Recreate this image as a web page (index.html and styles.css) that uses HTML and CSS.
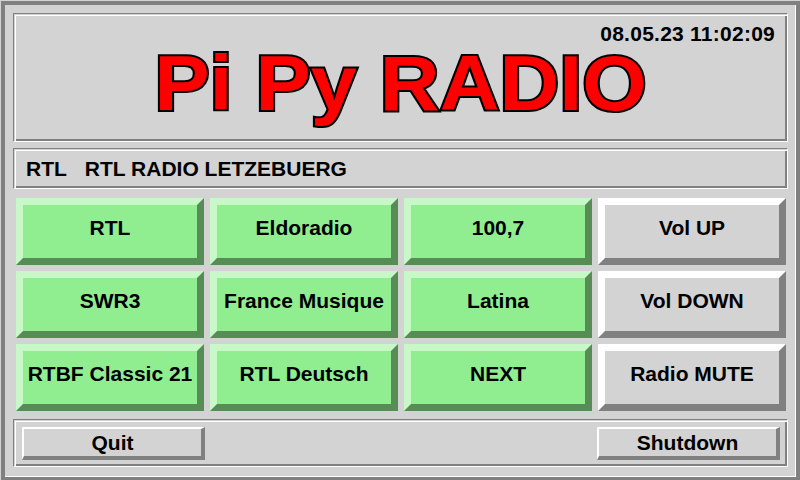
FILE: index.html
```html
<!DOCTYPE html>
<html>
<head>
<meta charset="utf-8">
<link rel="stylesheet" href="styles.css">
</head>
<body>
<div class="window">
  <div class="frame title-frame">
    <div class="clock">08.05.23 11:02:09</div>
    <div class="logo">Pi Py RADIO</div>
  </div>
  <div class="frame station-frame"><span>RTL</span><span>RTL RADIO LETZEBUERG</span></div>
  <div class="grid">
    <div class="btn green">RTL</div>
    <div class="btn green">Eldoradio</div>
    <div class="btn green">100,7</div>
    <div class="btn gray">Vol UP</div>
    <div class="btn green">SWR3</div>
    <div class="btn green">France Musique</div>
    <div class="btn green">Latina</div>
    <div class="btn gray">Vol DOWN</div>
    <div class="btn green">RTBF Classic 21</div>
    <div class="btn green">RTL Deutsch</div>
    <div class="btn green">NEXT</div>
    <div class="btn gray">Radio MUTE</div>
  </div>
  <div class="frame bottom-frame">
    <div class="small">Quit</div>
    <div class="small">Shutdown</div>
  </div>
</div>
</body>
</html>
```
FILE: styles.css
```css
* { box-sizing: border-box; }
html, body { margin: 0; padding: 0; }
body {
  background: #d3d3d3;
  width: 800px;
  height: 480px;
  overflow: hidden;
  font-family: "Liberation Sans", Arial, sans-serif;
  font-weight: bold;
  color: #000;
}
.window {
  margin: 1px 0 0 1px;
  width: 799px;
  height: 479px;
  border-style: solid;
  border-color: #808080;
  border-width: 4px 4px 3px 4px;
  box-shadow: inset -1px -1px 0 #fff;
  padding: 8px 8px 0 8px;
  display: flex;
  flex-direction: column;
}
.frame {
  border: 1px solid;
  border-color: #808080 #fff #fff #808080;
  box-shadow: inset 1px 1px 0 #d3d3d3, inset 2px 2px 0 #fff, inset -2px -2px 0 #808080;
}
.title-frame {
  height: 129px;
  flex: none;
  display: flex;
  flex-direction: column;
  padding-top: 8px;
}
.clock {
  font-size: 21px;
  line-height: 24px;
  text-align: right;
  padding-right: 12px;
  letter-spacing: 0.25px;
}
.logo {
  font-size: 77px;
  line-height: 75px;
  text-align: center;
  color: #f00;
  -webkit-text-stroke: 4px #000;
  paint-order: stroke fill;
  transform: scaleX(1.075);
}
.station-frame {
  height: 41px;
  flex: none;
  margin-top: 6px;
  display: flex;
  align-items: center;
  gap: 18px;
  padding-left: 12px;
  font-size: 21px;
}
.grid {
  margin-top: 9px;
  margin-left: 3px;
  display: grid;
  grid-template-columns: repeat(4, 188px);
  grid-template-rows: repeat(3, 67px);
  gap: 6px;
}
.btn {
  display: flex;
  align-items: center;
  justify-content: center;
  border: 7px solid;
  font-size: 21px;
  padding-bottom: 7px;
  white-space: nowrap;
}
.green {
  background: #90ee90;
  border-color: #c8f7c8 #578c57 #578c57 #c8f7c8;
}
.gray {
  background: #d3d3d3;
  border-color: #fff #808080 #808080 #fff;
}
.bottom-frame {
  margin-top: 8px;
  height: 48px;
  flex: none;
  display: flex;
  justify-content: space-between;
  align-items: flex-start;
  padding: 7px 7px 0 8px;
}
.small {
  width: 183px;
  height: 33px;
  border-style: solid;
  border-width: 2px 4px 4px 2px;
  border-color: #fff #808080 #808080 #fff;
  display: flex;
  align-items: center;
  justify-content: center;
  font-size: 21px;
  padding-top: 1px;
}
```
